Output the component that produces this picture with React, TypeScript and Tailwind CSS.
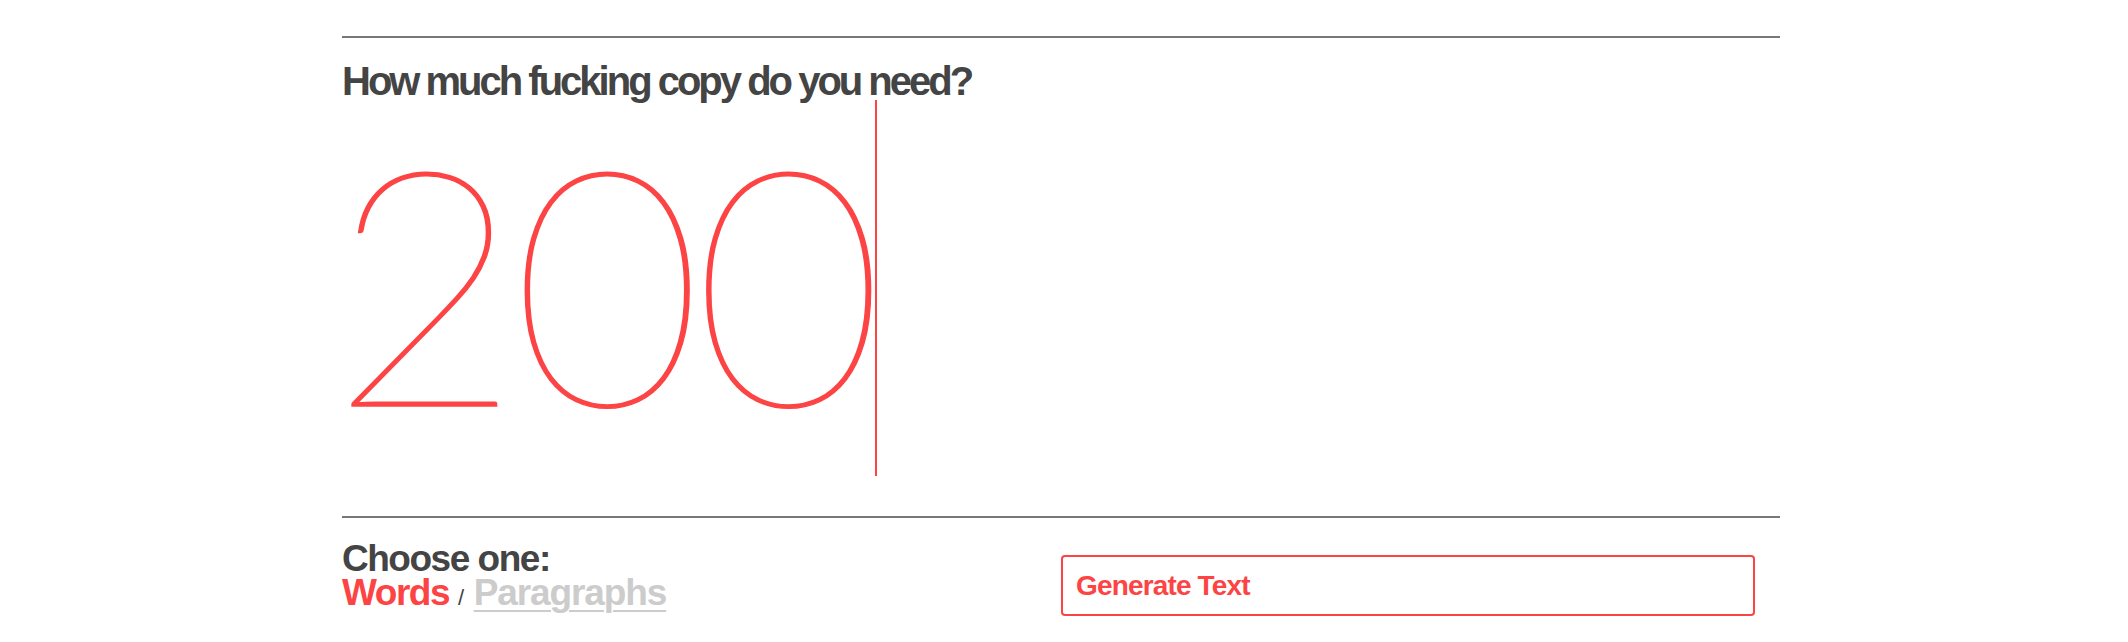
import { useState } from 'react';

// Copy generator: amount input, unit switch and the generate button
export default function App() {
  const [amount] = useState('200');
  const [unit, setUnit] = useState<'words' | 'paragraphs'>('words');

  return (
    <div className="min-h-screen bg-white font-['Liberation_Sans',Arial,sans-serif]">
      <div className="ml-[342px] w-[1438px] pt-[36px]">
        <div className="h-[2px] bg-[#777777]" />

        <h1 className="mt-[24px] text-[40px] leading-[38px] font-bold tracking-[-0.075em] text-[#444444]">
          How much fucking copy do you need?
        </h1>

        {/* big amount field with its caret */}
        <div className="flex h-[416px] items-start">
          <span className="-ml-[12px] font-['Lato',sans-serif] text-[330px] leading-[356px] font-thin tracking-[-0.03em] text-[#fd4444] [-webkit-text-stroke:1.5px_#fd4444]">
            {amount}
          </span>
          <span className="h-[376px] w-[2px] bg-[#fd4444]" />
        </div>

        <div className="h-[2px] bg-[#777777]" />

        <div className="grid grid-cols-2 items-start">
          <div className="mt-[24px] text-[37px] leading-[34px] font-bold tracking-[-0.04em]">
            <div className="text-[#444444]">Choose one:</div>
            <div>
              <button
                onClick={() => setUnit('words')}
                className={unit === 'words' ? 'text-[#fd4444]' : 'text-[#cccccc] underline decoration-2 underline-offset-[5px]'}
              >
                Words
              </button>
              <span className="ml-[9px] mr-[11px] text-[22px] font-normal text-[#444444]">/</span>
              <button
                onClick={() => setUnit('paragraphs')}
                className={
                  unit === 'paragraphs'
                    ? 'text-[#fd4444] tracking-[-0.03em]'
                    : 'text-[#cccccc] tracking-[-0.03em] underline decoration-2 underline-offset-[5px]'
                }
              >
                Paragraphs
              </button>
            </div>
          </div>

          <button className="mt-[37px] flex h-[61px] w-[694px] items-center rounded-[4px] border-2 border-[#fd4444] px-[13px] text-[28px] font-bold tracking-[-0.03em] text-[#fd4444]">
            Generate Text
          </button>
        </div>
      </div>
    </div>
  );
}
